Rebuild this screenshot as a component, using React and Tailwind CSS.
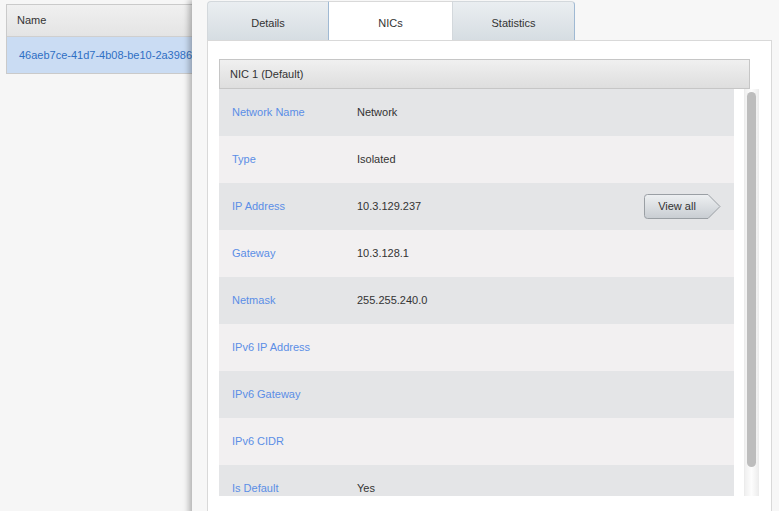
import React from "react";

const rows = [
  ["Network Name", "Network"],
  ["Type", "Isolated"],
  ["IP Address", "10.3.129.237", true],
  ["Gateway", "10.3.128.1"],
  ["Netmask", "255.255.240.0"],
  ["IPv6 IP Address", ""],
  ["IPv6 Gateway", ""],
  ["IPv6 CIDR", ""],
  ["Is Default", "Yes"],
];

function ViewAll() {
  return (
    <button className="relative w-[77px] h-[25px] mr-[13px] flex items-center text-[11px] text-[#333]">
      <svg className="absolute inset-0" width="77" height="25" viewBox="0 0 77 25">
        <defs>
          <linearGradient id="va" x1="0" y1="0" x2="0" y2="1">
            <stop offset="0" stopColor="#eef0f2" />
            <stop offset="1" stopColor="#c8cdd2" />
          </linearGradient>
        </defs>
        <path d="M3.5 0.5 H64 L76 12.5 L64 24.5 H3.5 Q0.5 24.5 0.5 21.5 V3.5 Q0.5 0.5 3.5 0.5 Z" fill="url(#va)" stroke="#9a9fa4" />
      </svg>
      <span className="relative w-[66px] text-center">View all</span>
    </button>
  );
}

export default function App() {
  return (
    <div className="relative w-[779px] h-[511px] overflow-hidden bg-[#f6f6f6] font-['Liberation_Sans',Arial,sans-serif]">
      {/* left table */}
      <div className="ml-[6px] mt-[4px] w-[260px] border border-[#cacaca] bg-white">
        <div className="h-[32px] flex items-center pl-[10px] text-[11px] text-[#333] bg-gradient-to-b from-[#f0f0f0] to-[#e4e4e4] border-b border-[#cfcfcf]">
          Name
        </div>
        <div className="h-[36px] flex items-center pl-[12px] text-[11px] text-[#2f6fc4] bg-[#cadcf3] whitespace-nowrap overflow-hidden">
          46aeb7ce-41d7-4b08-be10-2a3986a2c4e1
        </div>
      </div>

      {/* detail panel */}
      <div className="absolute left-[192px] top-0 right-0 h-[540px] bg-[#f7f7f7] shadow-[-3px_0_6px_rgba(0,0,0,0.28)] pl-[15px] flex flex-col">
        <div className="mt-[1px] flex h-[39px] text-[11px] text-[#333]">
          <div className="w-[122px] pt-[4px] flex items-center justify-center rounded-tl-[4px] border-t border-l border-r border-t-[#d3d8dc] border-l-[#d3d8dc] border-r-[#9fb9d3] bg-gradient-to-b from-[#eaeef1] to-[#d6dde2]">
            Details
          </div>
          <div className="w-[123px] pt-[4px] flex items-center justify-center border-t border-[#d9d9d9] bg-white">
            NICs
          </div>
          <div className="w-[123px] pt-[4px] flex items-center justify-center rounded-tr-[4px] border-t border-l border-r border-t-[#d3d8dc] border-l-[#d3d8dc] border-r-[#9fb9d3] bg-gradient-to-b from-[#eaeef1] to-[#d6dde2]">
            Statistics
          </div>
        </div>

        <div className="w-[565px] flex-1 bg-white border border-[#d9d9d9] pl-[11px] pt-[18px]">
          <div className="w-[531px] h-[30px] flex items-center pl-[10px] text-[11px] text-[#333] border border-[#c6c6c6] bg-gradient-to-b from-[#f0f0f0] to-[#dedede]">
            NIC 1 (Default)
          </div>
          <div className="flex gap-[10px] h-[407px]">
            <div className="w-[515px] h-[407px] overflow-hidden">
              {rows.map(([label, value, btn], i) => (
                <div
                  key={label}
                  className={`h-[47px] shrink-0 flex items-center text-[11px] ${i % 2 === 0 ? "bg-[#e4e5e7]" : "bg-[#f2f0f1]"}`}
                >
                  <div className="w-[138px] pl-[13px] text-[#5b8ee6]">{label}</div>
                  <div className="flex-1 text-[#333]">{value}</div>
                  {btn && <ViewAll />}
                </div>
              ))}
            </div>
            <div className="w-[15px] h-[407px] bg-gradient-to-r from-[#f0f0f0] via-[#fdfdfd] to-[#eeeeee] border-l border-r border-[#ececec] pt-[3px] flex justify-center">
              <div className="w-[9px] h-[375px] rounded-[5px] bg-[#bdbdbd]" />
            </div>
          </div>
        </div>
      </div>
    </div>
  );
}
